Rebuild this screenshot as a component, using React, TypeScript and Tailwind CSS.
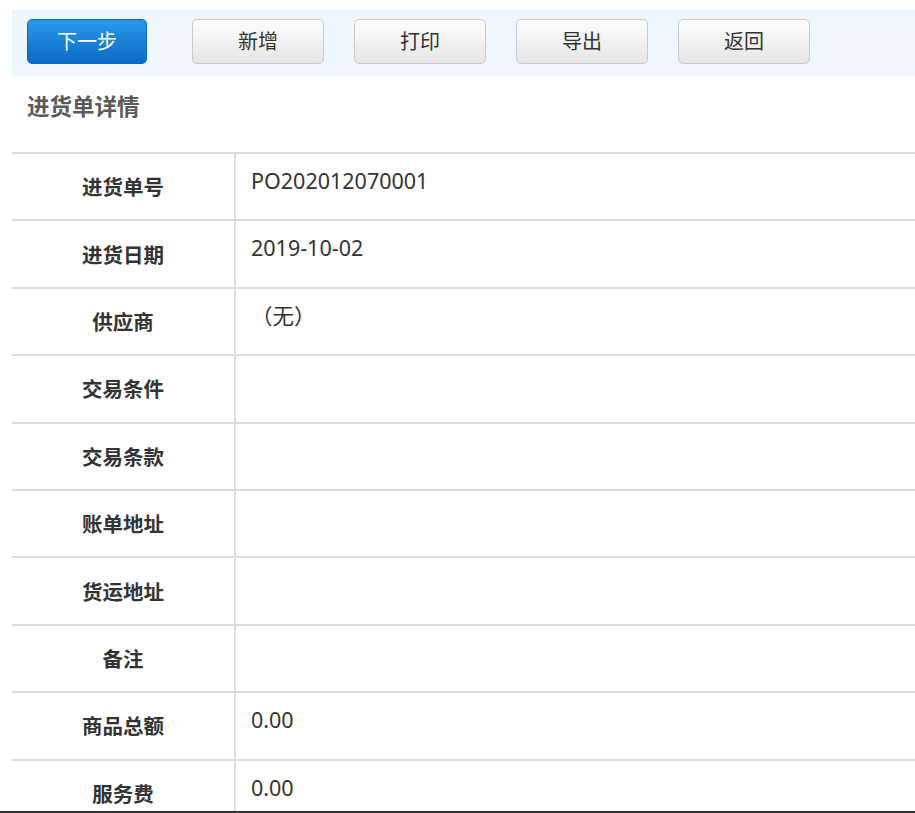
import * as React from "react";

const rows = [
  { label: "进货单号", value: "PO202012070001" },
  { label: "进货日期", value: "2019-10-02" },
  { label: "供应商", value: "（无）" },
  { label: "交易条件", value: "" },
  { label: "交易条款", value: "" },
  { label: "账单地址", value: "" },
  { label: "货运地址", value: "" },
  { label: "备注", value: "" },
  { label: "商品总额", value: "0.00" },
  { label: "服务费", value: "0.00" },
];

const buttons = ["新增", "打印", "导出", "返回"];

export default function App() {
  return (
    <div
      className="min-h-screen bg-white pt-[10px] pl-[12px] text-[#333]"
      style={{ fontFamily: '"Noto Sans", "Noto Sans CJK SC", sans-serif' }}
    >
      <div className="flex h-[66px] items-start bg-[#eef6fe] pl-[15px] pt-[9px]">
        <button className="h-[45px] w-[120px] rounded-[5px] border border-[#0a69bd] bg-gradient-to-b from-[#2a98ea] to-[#0a6cc4] text-[20px] text-white">
          下一步
        </button>
        <div className="ml-[45px] flex gap-[30px]">
          {buttons.map((b) => (
            <button
              key={b}
              className="h-[45px] w-[132px] rounded-[5px] border border-[#c9c9c9] bg-gradient-to-b from-[#fdfdfd] to-[#e6e6e6] text-[20px] text-[#333]"
            >
              {b}
            </button>
          ))}
        </div>
      </div>

      <h2 className="pl-[15px] pt-[16px] pb-[2px] text-[22.5px] font-bold leading-[30px] text-[#5a5a5a]">
        进货单详情
      </h2>

      <div className="mt-[28px] border-t-2 border-[#dcdcdc]">
        {rows.map((r) => (
          <div key={r.label} className="flex h-[67.4px] border-b-2 border-[#dcdcdc]">
            <div className="flex w-[224px] shrink-0 items-center justify-center border-r-2 border-[#dcdcdc] pt-[2px] text-[20.5px] font-bold text-[#333]">
              {r.label}
            </div>
            <div className="flex-1 pl-[15px] pt-[12px] text-[21.5px] leading-[30px] text-[#333]">
              {r.value}
            </div>
          </div>
        ))}
      </div>

      <div className="fixed bottom-0 left-0 right-0 h-[2px] bg-[#333]" />
    </div>
  );
}
